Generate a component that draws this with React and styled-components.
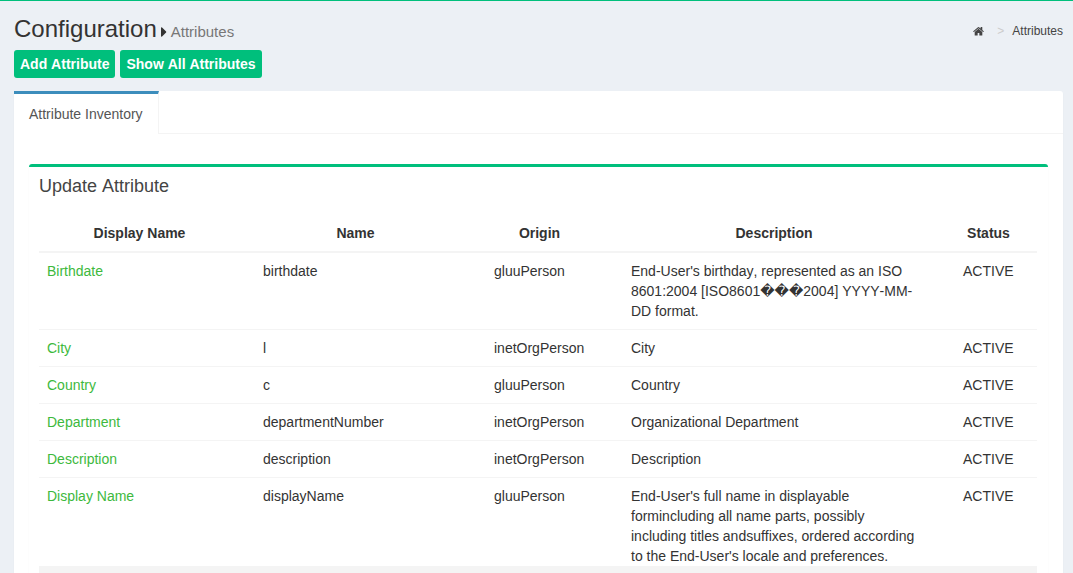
import React from "react";
import styled, { createGlobalStyle } from "styled-components";
import { FaCaretRight } from "react-icons/fa";

const GlobalStyle = createGlobalStyle`
  *, *::before, *::after { box-sizing: border-box; }
  body {
    margin: 0;
    background: #ecf0f5;
    color: #333;
    font-family: "Liberation Sans", Arial, "DejaVu Sans", sans-serif;
    font-size: 14px;
    line-height: 20px;
    font-kerning: none;
  }
`;

const Page = styled.div`
  display: flex;
  flex-direction: column;
  min-height: 100vh;
  border-top: 1px solid #00bf7c;
  padding: 15px 10px 0 14px;
  background: #ecf0f5;
`;

const Header = styled.header`
  display: flex;
  justify-content: space-between;
  align-items: center;
`;

const Title = styled.h1`
  display: flex;
  align-items: baseline;
  margin: 0;
  font-size: 24px;
  font-weight: 400;
  line-height: 26px;
`;

const Caret = styled(FaCaretRight)`
  width: 6px;
  height: 16px;
  margin: 2px 4px 0 4px;
  align-self: center;
`;

const Subtitle = styled.small`
  color: #777;
  font-size: 15px;
`;

const Breadcrumb = styled.nav`
  display: flex;
  align-items: center;
  font-size: 12px;

  a {
    display: flex;
    color: #444;
    text-decoration: none;
  }
`;

const Separator = styled.span`
  padding: 0 8px 0 13px;
  color: #ccc;
`;

const Actions = styled.div`
  display: flex;
  gap: 5px;
  margin: 5px 0 13px;
`;

const ActionButton = styled.button`
  height: 28px;
  padding: 0 6px;
  border: 0;
  border-radius: 3px;
  background: #00bf7c;
  color: #fff;
  font: bold 14px/20px "Liberation Sans", Arial, sans-serif;
  font-kerning: none;
  cursor: pointer;
`;

const Panel = styled.section`
  flex: 1;
  display: flex;
  flex-direction: column;
  border-radius: 3px 3px 0 0;
  background: #fff;
  box-shadow: 0 1px 1px rgba(0, 0, 0, 0.1);
`;

const TabBar = styled.div`
  display: flex;
  border-bottom: 1px solid #f4f4f4;
`;

const Tab = styled.a`
  margin-bottom: -1px;
  padding: 10px 15px;
  border-top: 3px solid #3c8dbc;
  border-right: 1px solid #f4f4f4;
  background: #fff;
  color: #555;
  text-decoration: none;
`;

const TabContent = styled.div`
  flex: 1;
  display: flex;
  padding: 30px 15px 0;
`;

const Box = styled.div`
  flex: 1;
  min-width: 0;
  border-top: 3px solid #00bf7c;
  border-radius: 3px 3px 0 0;
  padding: 10px 11px 0 10px;
  box-shadow: 0 1px 1px rgba(0, 0, 0, 0.1);
`;

const BoxTitle = styled.h2`
  margin: 0 0 20px;
  color: #444;
  font-size: 18px;
  font-weight: 400;
  line-height: 18px;
`;

const Table = styled.table`
  width: 100%;
  table-layout: fixed;
  border-collapse: separate;
  border-spacing: 0;
`;

const Column = styled.col`
  width: ${(p) => p.$width};
`;

const HeadCell = styled.th`
  padding: 8px 38px 8px 8px;
  border-bottom: 2px solid #f4f4f4;
  text-align: center;

  &:first-child,
  &:last-child {
    padding-right: 23px;
  }
`;

const Cell = styled.td`
  padding: 8px 38px 8px 8px;
  vertical-align: top;

  tr + tr > & {
    border-top: 1px solid #f4f4f4;
  }

  tr:last-child > & {
    padding-bottom: 0;
  }

  &:last-child {
    padding-right: 8px;
  }
`;

const AttributeLink = styled.a`
  color: #3db93d;
  text-decoration: none;
`;

const TableFooter = styled.div`
  height: 7px;
  background: #f4f4f4;
`;

const HomeIcon = () => (
  <svg width="11" height="11" viewBox="0 0 1664 1536" fill="currentColor" aria-label="Home" role="img">
    <path d="M1408 992v480q0 26-19 45t-45 19H960v-384H704v384H320q-26 0-45-19t-19-45V992q0-1 .5-3t.5-3l575-474 575 474q1 2 1 6zm223-69l-62 74q-8 9-21 11h-3q-13 0-21-7L832 424l-692 577q-12 8-24 7-13-2-21-11l-62-74q-8-10-7-23.500t11-21.500l719-599q32-26 76-26t76 26l244 204V288q0-14 9-23t23-9h192q14 0 23 9t9 23v408l219 182q10 8 11 21.500t-7 23.500z" />
  </svg>
);

const columns = [
  { label: "Display Name", width: "216px" },
  { label: "Name", width: "231px" },
  { label: "Origin", width: "137px" },
  { label: "Description", width: "auto" },
  { label: "Status", width: "82px" },
];

const attributes = [
  ["Birthdate", "birthdate", "gluuPerson", "End-User's birthday, represented as an ISO 8601:2004 [ISO8601\uFFFD\uFFFD\uFFFD2004] YYYY-MM-DD format."],
  ["City", "l", "inetOrgPerson", "City"],
  ["Country", "c", "gluuPerson", "Country"],
  ["Department", "departmentNumber", "inetOrgPerson", "Organizational Department"],
  ["Description", "description", "inetOrgPerson", "Description"],
  ["Display Name", "displayName", "gluuPerson", "End-User's full name in displayable formincluding all name parts, possibly including titles andsuffixes, ordered according to the End-User's locale and preferences."],
];

export default function App() {
  return (
    <Page>
      <GlobalStyle />
      <Header>
        <Title>
          Configuration
          <Caret aria-hidden="true" />
          <Subtitle>Attributes</Subtitle>
        </Title>
        <Breadcrumb aria-label="Breadcrumb">
          <a href="#home"><HomeIcon /></a>
          <Separator>&gt;</Separator>
          <a href="#attributes">Attributes</a>
        </Breadcrumb>
      </Header>
      <Actions>
        <ActionButton type="button">Add Attribute</ActionButton>
        <ActionButton type="button">Show All Attributes</ActionButton>
      </Actions>
      <Panel>
        <TabBar>
          <Tab href="#inventory">Attribute Inventory</Tab>
        </TabBar>
        <TabContent>
          <Box>
            <BoxTitle>Update Attribute</BoxTitle>
            <Table>
              <colgroup>
                {columns.map((c) => <Column key={c.label} $width={c.width} />)}
              </colgroup>
              <thead>
                <tr>
                  {columns.map((c) => <HeadCell key={c.label} scope="col">{c.label}</HeadCell>)}
                </tr>
              </thead>
              <tbody>
                {attributes.map(([label, name, origin, description]) => (
                  <tr key={name}>
                    <Cell><AttributeLink href={`#${name}`}>{label}</AttributeLink></Cell>
                    <Cell>{name}</Cell>
                    <Cell>{origin}</Cell>
                    <Cell>{description}</Cell>
                    <Cell>ACTIVE</Cell>
                  </tr>
                ))}
              </tbody>
            </Table>
            <TableFooter />
          </Box>
        </TabContent>
      </Panel>
    </Page>
  );
}
